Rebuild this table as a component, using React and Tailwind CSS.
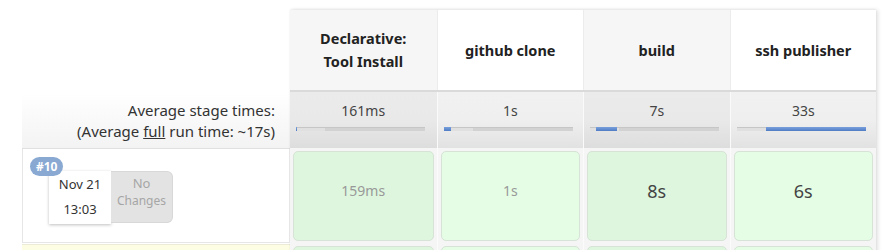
import React from "react";

const stages = [
  { name: ["Declarative:", "Tool Install"], avg: "161ms", blue: [0, 1], dur: "159ms", big: false, odd: true },
  { name: ["github clone"], avg: "1s", blue: [0, 7], dur: "1s", big: false, odd: false },
  { name: ["build"], avg: "7s", blue: [6, 21], dur: "8s", big: true, odd: true },
  { name: ["ssh publisher"], avg: "33s", blue: [29, 100], dur: "6s", big: true, odd: false },
];

function Bar({ blue }) {
  return (
    <div className="relative w-[129px] h-[4px] bg-[#d2d2d2] border-t border-[#c6c6c6]">
      <div className="absolute left-0 top-0 h-[3px] w-[29px] bg-[#e0e0e0]" />
      <div
        className="absolute top-[-1px] h-[4px] bg-gradient-to-b from-[#7aa0dc] to-[#4f7cc6]"
        style={{ left: blue[0], width: blue[1] }}
      />
    </div>
  );
}

export default function App() {
  return (
    <div
      className="relative w-[893px] h-[250px] overflow-hidden bg-white flex items-start text-[#333]"
      style={{ fontFamily: '"Noto Sans", "Open Sans", sans-serif' }}
    >
      {/* left column */}
      <div className="w-[290px] shrink-0 pl-[22px] pt-[93px] flex flex-col">
        <div className="h-[56px] bg-gradient-to-b from-white to-[#f3f3f3] border-b border-[#e0e0e0] flex flex-col items-end justify-center pr-[15px] text-[15px] leading-[21px] text-[#333]">
          <div>Average stage times:</div>
          <div>
            (Average <span className="underline">full</span> run time: ~17s)
          </div>
        </div>
        <div className="relative h-[94px] border-x border-b border-[#e6e6e6] bg-white">
          <div className="flex ml-[26px] mt-[22px]">
            <div className="w-[62px] h-[53px] bg-white shadow-[0_1px_3px_rgba(0,0,0,0.25)] flex flex-col items-center text-[13px] text-[#333] leading-[25px] pt-[1px]">
              <div>Nov 21</div>
              <div>13:03</div>
            </div>
            <div className="w-[62px] h-[52px] bg-[#e3e3e3] rounded-r-[6px] border border-l-0 border-[#d8d8d8] flex flex-col items-center text-[12px] text-[#a6a6a6] leading-[18px] pt-[2px]">
              <div className="text-[13px]">No</div>
              <div>Changes</div>
            </div>
          </div>
          <div className="absolute left-[7px] top-[8px] h-[19px] px-[6px] rounded-full bg-[#89a9d2] text-white font-bold text-[12px] leading-[19px]">
            #10
          </div>
        </div>
        <div className="h-[8px] mt-px bg-[#fdfde3] border-t border-[#ebebd8]" />
      </div>

      {/* stage table */}
      <div className="mt-[10px] w-[586px] shrink-0 flex flex-col shadow-[2px_0_4px_rgba(0,0,0,0.12),0_-1px_2px_rgba(0,0,0,0.05)] bg-[#f4f4f4]">
        <div className="grid grid-cols-4 h-[80px]">
          {stages.map((s, i) => (
            <div
              key={i}
              className={`flex flex-col items-center justify-center text-center font-bold text-[14.5px] leading-[23px] text-[#222] ${
                s.odd ? "bg-[#f6f6f6]" : "bg-white"
              } ${i > 0 ? "border-l border-[#ececec]" : ""}`}
            >
              {s.name.map((n) => (
                <div key={n}>{n}</div>
              ))}
            </div>
          ))}
        </div>
        <div className="h-[2px] bg-[#dadada]" />
        <div className="grid grid-cols-4 h-[56px]">
          {stages.map((s, i) => (
            <div
              key={i}
              className={`flex flex-col pt-[9px] ${
                s.odd
                  ? "bg-gradient-to-b from-[#ebebeb] via-[#e9e9e9] to-[#dddddd]"
                  : "bg-gradient-to-b from-[#f1f1f1] via-[#efefef] to-[#e2e2e2]"
              } ${i > 0 ? "border-l border-[#fafafa]" : ""}`}
            >
              <div className="text-center text-[14px] leading-[20px] text-[#444]">{s.avg}</div>
              <div className="mt-[6px] pl-[6px]">
                <Bar blue={s.blue} />
              </div>
            </div>
          ))}
        </div>
        <div className="grid grid-cols-4 h-[96px] bg-[#f5f5f5]">
          {stages.map((s, i) => (
            <div key={i} className={`p-[3px] ${i > 0 ? "border-l border-[#fbfbfb]" : ""}`}>
              <div
                className={`h-full rounded-[5px] border border-[#d6e3d6] flex justify-center pt-[27px] ${
                  s.odd ? "bg-[#ddf6dd]" : "bg-[#e4fde4]"
                }`}
              >
                <span
                  className={
                    s.big
                      ? "text-[18px] leading-[24px] text-[#444]"
                      : "text-[14px] leading-[24px] text-[#999]"
                  }
                >
                  {s.dur}
                </span>
              </div>
            </div>
          ))}
        </div>
        <div className="grid grid-cols-4 h-[20px] bg-[#f5f5f5]">
          {stages.map((s, i) => (
            <div key={i} className={`px-[3px] pt-[2px] ${i > 0 ? "border-l border-[#fbfbfb]" : ""}`}>
              <div className={`h-full rounded-[5px] border border-[#d6e3d6] ${s.odd ? "bg-[#ddf6dd]" : "bg-[#e4fde4]"}`} />
            </div>
          ))}
        </div>
      </div>
    </div>
  );
}
